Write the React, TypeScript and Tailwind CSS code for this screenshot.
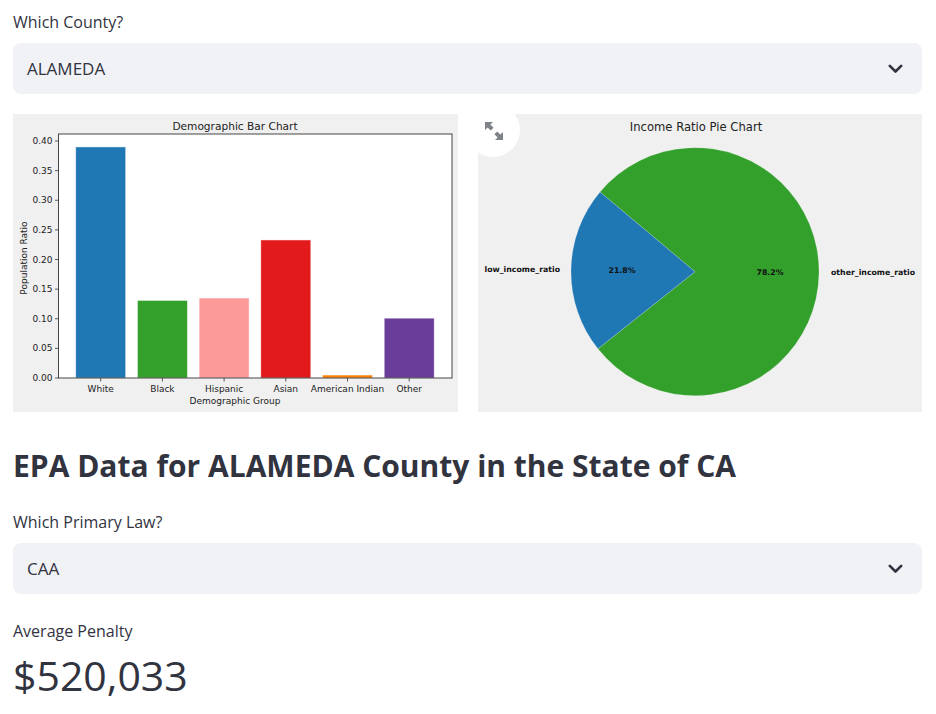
import React from 'react';

const bars = [
    { label: 'White', value: 0.39, color: '#1f77b4' },
    { label: 'Black', value: 0.131, color: '#33a02c' },
    { label: 'Hispanic', value: 0.135, color: '#fb9a99' },
    { label: 'Asian', value: 0.233, color: '#e31a1c' },
    { label: 'American Indian', value: 0.005, color: '#ff7f00' },
    { label: 'Other', value: 0.101, color: '#6a3d9a' },
];

function Chevron() {
    return (
        <svg width="15" height="10" viewBox="0 0 15 10" fill="none">
            <path d="M1.8 1.8 L7.5 7.5 L13.2 1.8" stroke="#31333f" strokeWidth="2.6" strokeLinecap="round" strokeLinejoin="round" />
        </svg>
    );
}

function SelectBox({ value }: { value: string }) {
    return (
        <div className="flex h-[51px] items-center justify-between rounded-lg bg-[#f0f2f6] pl-[14px] pr-[19px]">
            <span className="text-[17px] text-[#31333f]">{value}</span>
            <Chevron />
        </div>
    );
}

function BarChart() {
    // axes box in image coords
    const left = 45.5, right = 439, top = 20, bottom = 264;
    const perUnit = (264 - 27) / 0.4;
    const ticks = [0, 0.05, 0.1, 0.15, 0.2, 0.25, 0.3, 0.35, 0.4];
    return (
        <svg width="445" height="298" viewBox="0 0 445 298" fontFamily="'DejaVu Sans', sans-serif">
            <rect x="0" y="0" width="445" height="298" fill="#f0f0f0" />
            <rect x={left} y={top} width={right - left} height={bottom - top} fill="#ffffff" />
            <text x="222" y="11.5" fontSize="10.6" textAnchor="middle" dominantBaseline="central" fill="#222">Demographic Bar Chart</text>
            {bars.map((b, i) => {
                const x = 62.7 + i * 61.7;
                const h = b.value * perUnit;
                return (
                    <g key={b.label}>
                        <rect x={x} y={bottom - h} width="50" height={h} fill={b.color} stroke="#ffffff" strokeOpacity="0.6" strokeWidth="0.8" />
                        <line x1={x + 25} y1={bottom} x2={x + 25} y2={bottom + 3.5} stroke="#333" strokeWidth="0.8" />
                        <text x={x + 25} y={274.5} fontSize="9" textAnchor="middle" dominantBaseline="central" fill="#222">{b.label}</text>
                    </g>
                );
            })}
            {ticks.map((t) => {
                const y = bottom - t * perUnit;
                return (
                    <g key={t}>
                        <line x1={left - 3.5} y1={y} x2={left} y2={y} stroke="#333" strokeWidth="0.8" />
                        <text x={left - 6} y={y} fontSize="9" textAnchor="end" dominantBaseline="central" fill="#222">{t.toFixed(2)}</text>
                    </g>
                );
            })}
            <rect x={left} y={top} width={right - left} height={bottom - top} fill="none" stroke="#333" strokeWidth="0.9" />
            <text x="222" y="287" fontSize="9" textAnchor="middle" dominantBaseline="central" fill="#222">Demographic Group</text>
            <text x="10.5" y="144" fontSize="9" textAnchor="middle" dominantBaseline="central" fill="#222" transform="rotate(-90 10.5 144)">Population Ratio</text>
        </svg>
    );
}

function PieChart() {
    const cx = 217, cy = 157.7, r = 124;
    const pt = (deg: number, rad = r) => {
        const a = (deg * Math.PI) / 180;
        return [cx + rad * Math.cos(a), cy - rad * Math.sin(a)];
    };
    const start = 140;
    const mid = start + 0.218 * 360;
    const [x1, y1] = pt(start);
    const [x2, y2] = pt(mid);
    const blue = `M${cx} ${cy} L${x1} ${y1} A${r} ${r} 0 0 0 ${x2} ${y2} Z`;
    const green = `M${cx} ${cy} L${x2} ${y2} A${r} ${r} 0 1 0 ${x1} ${y1} Z`;
    return (
        <svg width="444" height="298" viewBox="0 0 444 298" fontFamily="'DejaVu Sans', sans-serif">
            <rect x="0" y="0" width="444" height="298" fill="#f0f0f0" />
            <text x="218" y="12.7" fontSize="11.6" textAnchor="middle" dominantBaseline="central" fill="#222">Income Ratio Pie Chart</text>
            <path d={green} fill="#33a02c" stroke="#ffffff" strokeOpacity="0.3" strokeWidth="0.6" />
            <path d={blue} fill="#1f77b4" stroke="#ffffff" strokeOpacity="0.3" strokeWidth="0.6" />
            <text x="82" y="155" fontSize="7.8" fontWeight="bold" textAnchor="end" dominantBaseline="central" fill="#111">low_income_ratio</text>
            <text x="144" y="156.5" fontSize="7.8" fontWeight="bold" textAnchor="middle" dominantBaseline="central" fill="#111">21.8%</text>
            <text x="292" y="158" fontSize="7.8" fontWeight="bold" textAnchor="middle" dominantBaseline="central" fill="#111">78.2%</text>
            <text x="353" y="158.5" fontSize="7.8" fontWeight="bold" textAnchor="start" dominantBaseline="central" fill="#111">other_income_ratio</text>
        </svg>
    );
}

function ExpandIcon() {
    return (
        <svg width="20" height="20" viewBox="0 0 20 20" fill="#808289">
            <path d="M1 1 L9 1 L6.4 3.6 L9.6 6.8 L6.8 9.6 L3.6 6.4 L1 9 Z" />
            <path d="M19 19 L11 19 L13.6 16.4 L10.4 13.2 L13.2 10.4 L16.4 13.6 L19 11 Z" />
        </svg>
    );
}

export default function App() {
    return (
        <div className="min-h-[714px] w-[936px] bg-white pl-[13px] pr-[14px] pt-[10px] font-['Open_Sans',sans-serif] text-[#31333f]">
            <div className="h-[24px] text-[16px] leading-[24px]">Which County?</div>
            <div className="mt-[9px]">
                <SelectBox value="ALAMEDA" />
            </div>

            <div className="mt-[20px] grid h-[298px] grid-cols-2 gap-[20px]">
                <div className="overflow-hidden bg-[#f0f0f0]">
                    <BarChart />
                </div>
                <div className="relative bg-[#f0f0f0]">
                    <div className="overflow-hidden">
                        <PieChart />
                    </div>
                    <div className="absolute left-[-12px] top-[-11px] flex h-[54px] w-[54px] items-center justify-center rounded-full bg-white pl-[2px] pt-[2px]">
                        <ExpandIcon />
                    </div>
                </div>
            </div>

            <h2 className="mt-[32px] h-[44px] text-[30px] font-bold leading-[44px] text-[#31333f]">
                EPA Data for ALAMEDA County in the State of CA
            </h2>

            <div className="mt-[22px] h-[24px] text-[16px] leading-[24px]">Which Primary Law?</div>
            <div className="mt-[9px]">
                <SelectBox value="CAA" />
            </div>

            <div className="mt-[25px] h-[24px] text-[16px] leading-[24px]">Average Penalty</div>
            <div className="mt-[8px] h-[48px] text-[41px] leading-[48px]">$520,033</div>
        </div>
    );
}
